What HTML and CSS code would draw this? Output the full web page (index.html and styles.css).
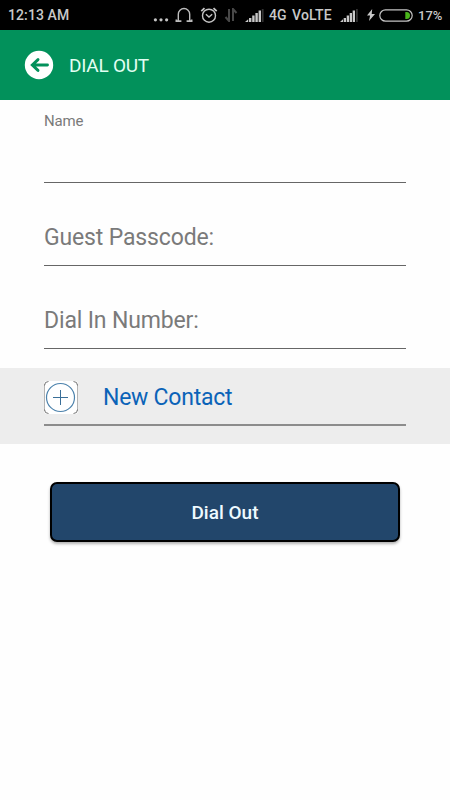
FILE: index.html
```html
<!DOCTYPE html>
<html lang="en">
<head>
    <meta charset="UTF-8">
    <meta name="viewport" content="width=device-width, initial-scale=1.0">
    <title>Dial Out</title>
    <link rel="stylesheet" href="styles.css">
</head>
<body>
    <div class="status-bar">
        <span class="time">12:13 AM</span>
        <div class="status-icons">
            <svg class="icon-dots" width="16" height="16" viewBox="0 0 16 16" fill="#c4c4c4">
                <circle cx="2.4" cy="12.8" r="1.6"/>
                <circle cx="8" cy="12.8" r="1.6"/>
                <circle cx="13.6" cy="12.8" r="1.6"/>
            </svg>
            <svg class="icon-headset" width="18" height="16" viewBox="0 0 18 16" fill="none" stroke="#bcbcbc" stroke-width="1.4">
                <path d="M3.3 14V7.2a5.7 5.7 0 0 1 11.4 0V14"/>
                <path d="M1.4 12.5v1.6h5M16.6 12.5v1.6h-5" stroke-width="1.8"/>
            </svg>
            <svg class="icon-alarm" width="18" height="16" viewBox="0 0 18 16" fill="none" stroke="#c4c4c4" stroke-width="1.4">
                <circle cx="9" cy="8.7" r="6.5"/>
                <path d="M5.9 7.3L9 10l3.2-2.7"/>
                <path d="M1.3 4.2l3.2-3M16.7 4.2l-3.2-3" stroke-width="1.8"/>
            </svg>
            <svg class="icon-data" width="14" height="14" viewBox="0 0 14 14" fill="none" stroke="#484848" stroke-width="2">
                <path d="M5 1v12L1.5 9M9 13V1l3.5 4"/>
            </svg>
            <svg class="icon-signal" width="19" height="14" viewBox="0 0 19 14" fill="#c8c8c8">
                <path d="M0 14l3.2-2.8V14zM4 10h2.4v4H4zM7.2 7.5h2.4V14H7.2zM10.4 5h2.4v9h-2.4zM13.6 2.5H16V14h-2.4z"/>
                <path d="M16.8 1h1.8v13h-1.8z" fill="#333"/>
            </svg>
            <span class="network">4G</span>
            <span class="carrier">VoLTE</span>
            <svg class="icon-signal-2" width="19" height="14" viewBox="0 0 19 14" fill="#c8c8c8">
                <path d="M0 14l3-2.8V14zM3.7 10H6v4H3.7zM6.7 7.5H9V14H6.7zM9.7 5H12v9H9.7zM12.7 2.5H15V14h-2.3z"/>
                <path d="M16 1h1.8v13H16z" fill="#333"/>
            </svg>
            <svg class="icon-bolt" width="8" height="12" viewBox="0 0 8 12" fill="#c8c8c8">
                <path d="M5.2 0L0 6.6h3.1L2 12l6-7H4.7z"/>
            </svg>
            <svg class="icon-battery" width="34" height="13" viewBox="0 0 34 13">
                <rect x=".8" y=".8" width="32.4" height="11.4" rx="5.7" fill="none" stroke="#c4c4c4" stroke-width="1.2"/>
                <path d="M26.3 3h1.2a3.5 3.5 0 0 1 0 7h-1.2z" fill="#4ab51b"/>
            </svg>
            <span class="percent">17%</span>
        </div>
    </div>

    <div class="header">
        <svg class="back-icon" width="30" height="30" viewBox="0 0 30 30" fill="none">
            <circle cx="15" cy="15" r="14.2" fill="#fff"/>
            <path d="M23.5 15H9M14 9.6L8.3 15l5.7 5.4" stroke="#02915b" stroke-width="2.9" stroke-linecap="round"/>
        </svg>
        <h1 class="title">DIAL OUT</h1>
    </div>

    <div class="form">
        <div class="field name-field">Name</div>
        <div class="field">Guest Passcode:</div>
        <div class="field">Dial In Number:</div>
    </div>

    <div class="contact">
        <div class="contact-row">
            <svg class="add-icon" width="34" height="34" viewBox="0 0 34 34" fill="none">
                <rect width="34" height="33" rx="3" fill="#fff"/>
                <path d="M.5 3v27M33.5 3v27" stroke="#b4b4b4"/>
                <path d="M.5 4.5Q.5.5 4.5.5M29.5.5q4 0 4 4M33.5 28.5q0 4-4 4M4.5 32.5q-4 0-4-4" stroke="#777"/>
                <circle cx="16.5" cy="16.5" r="14" stroke="#4c82ac" stroke-width="1.2"/>
                <path d="M9 16.5h15M16.5 9v15" stroke="#3a6f98"/>
            </svg>
            <span class="contact-text">New Contact</span>
        </div>
    </div>

    <button class="dial-button">Dial Out</button>
</body>
</html>
```

FILE: styles.css
```css
* {
    margin: 0;
    padding: 0;
    box-sizing: border-box;
}

body {
    font-family: Roboto, sans-serif;
    background: #fefefe;
    height: 100vh;
    overflow: hidden;
}

.status-bar {
    height: 30px;
    padding: 0 8px;
    background: #000;
    color: #c8c8c8;
    font-size: 14px;
    font-weight: 500;
    display: flex;
    justify-content: space-between;
    align-items: center;
    white-space: nowrap;
}

.time {
    letter-spacing: 0.1px;
}

.status-icons {
    display: flex;
    align-items: center;
}

.icon-dots {
    margin-right: 6px;
}

.icon-headset {
    margin-right: 7px;
}

.icon-alarm {
    margin-right: 6px;
}

.icon-data {
    margin-right: 7px;
}

.icon-signal {
    margin-right: 5px;
}

.network {
    width: 23px;
}

.carrier {
    width: 40px;
    margin-right: 8px;
    letter-spacing: 0.2px;
}

.icon-signal-2 {
    margin-right: 8px;
}

.icon-bolt {
    margin-right: 4px;
}

.icon-battery {
    margin-right: 5px;
}

.percent {
    width: 24px;
    font-size: 13px;
}

.header {
    height: 70px;
    padding-left: 24px;
    background: #02915b;
    display: flex;
    align-items: center;
    gap: 15px;
}

.title {
    color: #e2fff3;
    font-size: 19px;
    font-weight: 400;
    letter-spacing: -0.25px;
}

.form {
    padding: 0 44px;
}

.field {
    height: 83px;
    padding-top: 41px;
    border-bottom: 1px solid #666;
    color: #7a7a7a;
    font-size: 23px;
    line-height: 27px;
    letter-spacing: -0.15px;
}

.name-field {
    padding-top: 12px;
    font-size: 15px;
    line-height: 18px;
}

.contact {
    height: 76px;
    margin-top: 19px;
    padding: 12px 44px 0;
    background: #ededed;
}

.contact-row {
    height: 46px;
    padding-top: 1px;
    border-bottom: 2px solid #8c8c8c;
    display: flex;
    align-items: flex-start;
    gap: 25px;
}

.contact-text {
    color: #0b63b8;
    font-size: 23px;
    line-height: 34px;
    letter-spacing: -0.25px;
}

.dial-button {
    display: block;
    width: 350px;
    height: 60px;
    margin: 38px auto 0;
    background: #22466b;
    border: 2px solid #000;
    border-radius: 7px;
    box-shadow: 0 2px 3px rgba(0, 0, 0, 0.3);
    color: #eefaff;
    font-family: inherit;
    font-size: 19px;
    font-weight: 500;
}
```
